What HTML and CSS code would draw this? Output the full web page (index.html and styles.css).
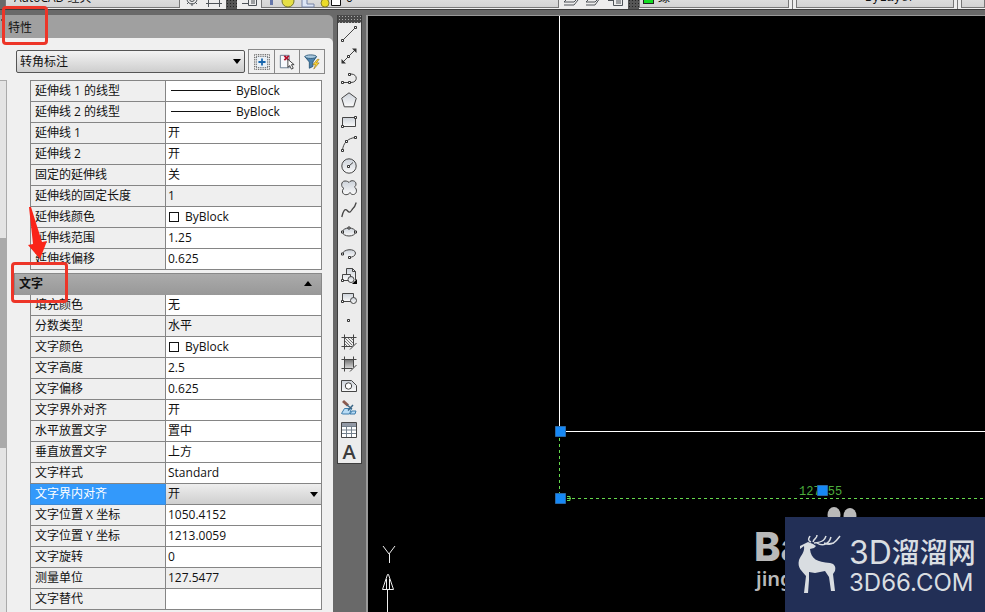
FILE: index.html
```html
<!DOCTYPE html>
<html lang="zh-CN">
<head>
<meta charset="utf-8">
<title>AutoCAD 特性</title>
<link rel="stylesheet" href="styles.css">
</head>
<body>
<svg class="defs" aria-hidden="true">
  <defs>
    <linearGradient id="shade" x1="0" y1="0" x2="0" y2="1"><stop offset="0" stop-color="#ccd2da"/><stop offset="1" stop-color="#fafafa"/></linearGradient>
    <linearGradient id="fade" x1="0" y1="0" x2="0" y2="1"><stop offset="0" stop-color="#777"/><stop offset="1" stop-color="#e0e0e0"/></linearGradient>
    <pattern id="hatch" width="3" height="3" patternUnits="userSpaceOnUse"><path d="M0 0L3 3" stroke="#555" stroke-width=".8"/></pattern>
  </defs>
</svg>
<header class="topbar">
  <label class="combo combo-workspace"><select aria-label="工作空间"><option>AutoCAD 经典</option></select></label>
  <div class="tray tray-gear">
    <button aria-label="工作空间设置"><svg viewBox="0 0 16 16"><circle cx="8" cy="8" r="2.5"/><path d="M8 1v3M8 12v3M1 8h3M12 8h3M3 3l2 2M11 11l2 2M13 3l-2 2M5 11l-2 2"/><circle cx="8" cy="8" r="5"/></svg></button>
    <button aria-label="我的工作空间"><svg viewBox="0 0 16 16"><path d="M2.500 3.500h11v9h-11zM0 12.500h16M2.500 10v6M13.500 10v6"/></svg></button>
  </div>
  <i class="grip"></i>
  <div class="tray"><button aria-label="图层特性"><svg viewBox="0 0 16 16"><path d="M1 12.500h6M7.500 7.500h8v7h-8zM10 10h4M10 12h4"/></svg></button></div>
  <label class="combo combo-layer"><select aria-label="图层"><option>0</option></select>
    <svg class="layer-icons" viewBox="0 0 86 12"><path d="M9 1h3v7h-3z" fill="#6677aa"/><circle cx="27" cy="4" r="6" fill="#e5df45" stroke="#77772b"/><path d="M41 2h5v5h7v3h-12z" fill="#dce5f5" stroke="#7783a5"/><circle cx="64" cy="6" r="4" fill="#ebdc27" stroke="#88812a"/><path d="M70.500 0v8.500h9V0" fill="#fff" stroke="#111"/></svg></label>
  <div class="tray tray-layers">
    <button aria-label="置为当前"><svg viewBox="0 0 16 16"><path d="M1 11l4-4h10l-4 4zM1 14h10l4-5"/></svg></button>
    <button aria-label="上一个图层"><svg viewBox="0 0 16 16"><path d="M1 11l4-4h9l-4 4zM1 14h9l5-7"/></svg></button>
    <button aria-label="图层状态"><svg viewBox="0 0 16 16"><path d="M1 9.500h5M6.500 7.500h9v7h-9zM9 10h5M9 12h5"/></svg></button>
  </div>
  <i class="grip"></i>
  <label class="combo combo-color"><i class="green"></i><select aria-label="颜色"><option>绿</option></select></label>
  <i class="divider"></i>
  <label class="combo combo-linetype"><select aria-label="线型"><option>ByLayer</option></select></label>
  <i class="divider"></i>
  <label class="combo combo-rest"><select aria-label="线宽"><option></option></select></label>
</header>

<main class="workspace">
  <section class="panel">
    <h1 class="panel-title">特性</h1>
    <div class="panel-body">
      <div class="scroll-strip"><i></i></div>
      <div class="picker">
        <label class="drop"><select aria-label="对象类型"><option>转角标注</option></select></label>
        <div class="picker-buttons">
          <button aria-label="切换 PICKADD"><svg viewBox="0 0 18 18"><path d="M2.500 2.500h13v13h-13z" fill="#e9f0f6" stroke="#222" stroke-dasharray="1 1"/><path d="M.5 .5h17v17H.5z" stroke="#444" stroke-dasharray="1 1"/><path d="M9 5v8M5 9h8" stroke="#1967ae" stroke-width="2"/></svg></button>
          <button aria-label="选择对象"><svg viewBox="0 0 18 18"><path d="M1.500 1.500h10v14h-10z" fill="#f6f9fc" stroke="#5d7288"/><path d="M6 2l5 5M11 2l-5 5" stroke="#b3122d" stroke-width="2"/><path d="M10 6v9l2-2 2 4 2-1-2-4h3z" fill="#fff" stroke="#333"/></svg></button>
          <button aria-label="快速选择"><svg viewBox="0 0 18 18"><path d="M1 3l5 6v7l4-2V9l4-6z" fill="#4c82ad" stroke="#285678"/><ellipse cx="7.500" cy="3" rx="6.500" ry="2" fill="#a9c9df" stroke="#285678"/><path d="M15 6l-5 6h3l-2 5 6-7h-3l3-4z" fill="#ffd732" stroke="#94771e" stroke-width=".7"/></svg></button>
        </div>
      </div>

      <table class="props">
        <tr><th>延伸线 1 的线型</th><td><i class="sample-line"></i>ByBlock</td></tr>
        <tr><th>延伸线 2 的线型</th><td><i class="sample-line"></i>ByBlock</td></tr>
        <tr><th>延伸线 1</th><td>开</td></tr>
        <tr><th>延伸线 2</th><td>开</td></tr>
        <tr><th>固定的延伸线</th><td>关</td></tr>
        <tr><th>延伸线的固定长度</th><td class="readonly">1</td></tr>
        <tr><th>延伸线颜色</th><td><i class="swatch"></i>ByBlock</td></tr>
        <tr><th>延伸线范围</th><td>1.25</td></tr>
        <tr><th>延伸线偏移</th><td>0.625</td></tr>
      </table>

      <button class="category">文字</button>
      <table class="props">
        <tr><th>填充颜色</th><td>无</td></tr>
        <tr><th>分数类型</th><td class="readonly">水平</td></tr>
        <tr><th>文字颜色</th><td><i class="swatch"></i>ByBlock</td></tr>
        <tr><th>文字高度</th><td>2.5</td></tr>
        <tr><th>文字偏移</th><td>0.625</td></tr>
        <tr><th>文字界外对齐</th><td>开</td></tr>
        <tr><th>水平放置文字</th><td>置中</td></tr>
        <tr><th>垂直放置文字</th><td>上方</td></tr>
        <tr><th>文字样式</th><td>Standard</td></tr>
        <tr class="selected"><th><label for="inside-align">文字界内对齐</label></th><td><div class="cell-drop"><select id="inside-align"><option>开</option><option>关</option></select></div></td></tr>
        <tr><th>文字位置 X 坐标</th><td>1050.4152</td></tr>
        <tr><th>文字位置 Y 坐标</th><td>1213.0059</td></tr>
        <tr><th>文字旋转</th><td>0</td></tr>
        <tr><th>测量单位</th><td class="readonly">127.5477</td></tr>
        <tr><th>文字替代</th><td></td></tr>
      </table>
    </div>
  </section>

  <nav class="draw-tools" aria-label="绘图">
    <i class="tools-grip"></i>
    <button aria-label="直线"><svg viewBox="0 0 16 16"><path d="M2 14L14 2"/><path class="node" d="M.5 13.500h2v2h-2zM13.500 .5h2v2h-2z"/></svg></button>
    <button aria-label="构造线"><svg viewBox="0 0 16 16"><path d="M2 14L14 2"/><path class="solid" d="M11 .5h4.500V5zM.5 11v4.500H5z"/><path class="node" d="M6.500 7.500h2v2h-2z"/></svg></button>
    <button aria-label="多段线"><svg viewBox="0 0 16 16"><path d="M2 12.500h8c7 0 7-8.500 0-8.500H8"/><path class="node" d="M.5 11.500h2v2h-2zM7.500 11.500h2v2h-2zM7.500 3.500h2v2h-2z"/></svg></button>
    <button aria-label="正多边形"><svg viewBox="0 0 16 16"><path class="fill" d="M8 .8l7.300 5.400-2.600 8.600H3.300L.7 6.200z"/></svg></button>
    <button aria-label="矩形"><svg viewBox="0 0 16 16"><path class="fill" d="M1.500 3.500h13v9h-13z"/><path class="node" d="M.5 11.500h2v2h-2zM13.500 2.500h2v2h-2z"/></svg></button>
    <button aria-label="圆弧"><svg viewBox="0 0 16 16"><path d="M1.500 14.500C2 7 7 2 14.500 1.500"/><path class="node" d="M.5 13.500h2v2h-2zM4.500 4.500h2v2h-2zM13.500 .5h2v2h-2z"/></svg></button>
    <button aria-label="圆"><svg viewBox="0 0 16 16"><circle class="fill" cx="8" cy="8" r="7.200"/><path d="M8 8l4-3.500"/><path class="node" d="M6.500 7.500h2v2h-2z"/></svg></button>
    <button aria-label="修订云线"><svg viewBox="0 0 16 16"><path class="fill" d="M8 2.500C10 -.5 15 .5 15 4c0 2-1 2.500-1.500 3 3 2 2.500 7-1 7.500-2 .2-3-1-3.500-2-1.500 3-7 3-7.500-.5C1.200 10 2 9 3 8.500-.5 7 0 1 4 1c2 0 3 .5 4 1.500z"/></svg></button>
    <button aria-label="样条曲线"><svg viewBox="0 0 16 16"><path d="M.8 15C2 9 4 6 6.200 8.500 9 12 10 9 11.500 7 14 5 14.500 3 15.200 .5" stroke-width="1.300"/></svg></button>
    <button aria-label="椭圆"><svg viewBox="0 0 16 16"><ellipse class="fill" cx="8" cy="8" rx="6.500" ry="4"/><path class="node" d="M.5 7h2v2h-2zM13.500 7h2v2h-2zM7 3h2v2H7z"/></svg></button>
    <button aria-label="椭圆弧"><svg viewBox="0 0 16 16"><path class="fill" d="M1.500 8C2 3 14 2 14.500 7c0 3-3 4-6 4.500"/><path class="node" d="M.5 7h2v2h-2zM7.500 10.500h2v2h-2z"/></svg></button>
    <button aria-label="插入块"><svg viewBox="0 0 16 16"><path class="fill" d="M5.500 6V.5h6l3 3V12M11.500 .5v3h3M1.500 6.500h8v6h-8z"/><circle class="fill" cx="10" cy="11.500" r="3"/><path class="node" d="M.5 11.500h2v2h-2z"/><path class="black" d="M16 11v5h-5z"/></svg></button>
    <button aria-label="创建块"><svg viewBox="0 0 16 16"><path class="fill" d="M1.500 3.500h11v8h-11z"/><circle class="fill" cx="12.500" cy="10.500" r="3"/><path class="node" d="M.5 10.500h2v2h-2z"/></svg></button>
    <button aria-label="点"><svg viewBox="0 0 16 16"><path class="node" d="M6.500 7.500h2v2h-2z"/></svg></button>
    <button aria-label="图案填充"><svg viewBox="0 0 16 16"><path fill="url(#hatch)" stroke="none" d="M3 3h10v7l-3 3H3z"/><path d="M3.500 .5v15M12.500 .5v11M.5 3.500h15M.5 12.500h11M9 15.500L15.500 9"/></svg></button>
    <button aria-label="渐变色"><svg viewBox="0 0 16 16"><path fill="url(#fade)" stroke="none" d="M4 4h9v6l-3 3H4z"/><path d="M3.500 .5v15M12.500 .5v11M.5 3.500h15M.5 12.500h11M9 15.500L15.500 9"/></svg></button>
    <button aria-label="面域"><svg viewBox="0 0 16 16"><path class="fill" d="M.5 2.500h10l5 5v6H.5z"/><circle cx="7.500" cy="8" r="3.200" fill="#fff"/></svg></button>
    <button aria-label="添加选定对象"><svg viewBox="0 0 16 16"><path d="M.5 13.500l3-5h7l-2 5.500H2zM9 14l2-3h4l-1 3z" fill="#b9dcf5" stroke="#3b7baa"/><path d="M2 1l5 4.500" stroke="#8b5a4e" stroke-width="3"/><path d="M6 5l5 4M12 5l-5 5.500" stroke="#3a6686" stroke-width="1.500"/></svg></button>
    <button aria-label="表格"><svg viewBox="0 0 16 16"><path d="M.5 .5h15v15H.5z" fill="#fff"/><path class="bar" d="M1 1h14v3H1z"/><path d="M1 4.500h14M1 8h14M1 11.500h14M5.500 4v11M10.500 4v11" stroke="#74818d"/></svg></button>
    <button class="text-tool" aria-label="多行文字">A</button>
  </nav>

  <section class="canvas" aria-label="绘图区">
    <svg class="drawing" width="2000" height="1200" viewBox="368 16 2000 1200">
      <path d="M559.500 16v415.500H2368" stroke="#fff"/>
      <path d="M559.500 438v56M572 498.500H2368" stroke="#65d84d" stroke-dasharray="3 3"/>
      <path d="M567 496.500h3v4h-3M567 498.500h4" stroke="#65d84d"/>
      <text x="799" y="495" class="dimension">127.55</text>
      <path d="M555.500 426.500h10v10h-10zM555.500 493.500h10v10h-10zM817.500 485.500h10v10h-10z" fill="#1688f5" stroke="#2868a7"/>
      <path d="M383 546l6 8 6-8M389.500 554v9M387.500 590v30M382.500 589.500h11l-5-15h-1zM386.500 579v10M389.500 579v10" stroke="#eee"/>
    </svg>
    <div class="watermark">
      <svg class="ears" viewBox="0 0 34 17"><ellipse cx="7" cy="8" rx="6.500" ry="8"/><ellipse cx="23" cy="9" rx="6.500" ry="8"/></svg>
      <div class="baidu"><strong>Ba</strong><span>jing</span></div>
      <div class="brand">
        <svg class="deer" viewBox="0 0 44 58"><path d="M3 11l8-4 5 2 3 2-2 2-4 1c1 10 7 13 20 14 5 1 6 4 5 8l-2 3 2 17h-4l-2-14-4-6-10 2-6-1v8l-1 13H7l2-17C5 36 0 33 2 25c2-5 6-8 5-14l-4 3z"/><path d="M14 7C10 5 12 3 13 1M16 7c1-4 4-3 4-7M17 8c10-1 11-4 12-7M20 8c6 4 12 1 14-6M27 8c9 4 13-3 16-7M31 9l6-1" fill="none" stroke="#d9dde1" stroke-width="1.500"/></svg>
        <div class="brand-text"><div class="brand-name"><span>3D</span>溜溜网</div><div class="brand-url">3D66.COM</div></div>
      </div>
    </div>
  </section>
</main>

<i class="mark mark-title"></i>
<i class="mark mark-category"></i>
<svg class="mark-arrow" viewBox="0 0 20 52"><path d="M1 0h2l11 35 5-1-7 18L0 38l5-1z"/></svg>
</body>
</html>
```
FILE: styles.css
```css
* { box-sizing: border-box; }
body {
  margin: 0; height: 100vh; overflow: hidden; display: flex; flex-direction: column;
  background: #696969; color: #111;
  font: 12px/20px "Open Sans", "Noto Sans CJK SC", sans-serif;
}
button, select { font: inherit; color: inherit; margin: 0; border-radius: 0; }
button { padding: 0; border: 0; background: none; }
select { appearance: none; outline: 0; }
i { font-style: normal; }
.defs { position: absolute; width: 0; height: 0; }

.topbar { flex: none; height: 10px; padding-left: 5px; display: flex; align-items: flex-end; overflow: hidden; border-bottom: 1px solid #3c3c3c; }
.combo { position: relative; flex: none; height: 24px; background: #efefef; padding-bottom: 1px; }
.combo select { display: block; width: 100%; height: 23px; border: 1px solid #777; background: linear-gradient(#eee, #d3d3d3); padding: 2px 8px 0; line-height: 20px; }
.combo-workspace { width: 175px; }
.combo-layer { width: 298px; }
.combo-layer select { padding-left: 84px; }
.layer-icons { position: absolute; left: 0; bottom: 0; width: 86px; height: 12px; fill: none; }
.combo-color { width: 150px; }
.combo-color select { padding-left: 18px; }
.green { position: absolute; left: 4px; bottom: 5px; width: 11px; height: 11px; background: #13dc22; border: 1px solid #222; }
.combo-linetype { width: 158px; }
.combo-linetype select { padding-left: 68px; font-family: "Liberation Mono", monospace; }
.combo-rest { flex: 1; }
.tray { flex: none; height: 24px; background: #ededed; display: flex; align-items: flex-end; gap: 8px; padding: 0 4px 2px; }
.tray svg { display: block; width: 16px; height: 16px; fill: none; stroke: #4e5358; }
.tray-gear { width: 46px; gap: 6px; }
.tray-layers { width: 69px; gap: 6px; }
.grip { flex: none; width: 11px; height: 10px; background: radial-gradient(circle, #222 1px, transparent 1px) 0 0 / 3px 3px, #555; }
.divider { flex: none; width: 7px; height: 24px; background: linear-gradient(90deg, #eee 3px, #777 3px, #777 4px, #eee 4px); }

.workspace { flex: 1; min-height: 0; display: flex; gap: 4px; padding-top: 5px; }
.panel { flex: none; width: 333px; background: #a0a0a0; overflow: hidden; border-top-right-radius: 5px; }
.panel-title { margin: 0; height: 23px; padding: 3px 8px 0; font-size: 12px; font-weight: 400; line-height: 20px; background: radial-gradient(circle, #555 1px, transparent 1px) 0 4px / 3px 3px no-repeat; }
.panel-body { position: relative; min-height: 100%; background: #f0f0f0; border-top-right-radius: 5px; padding: 11px 8px 0 14px; }
.scroll-strip { position: absolute; left: 0; top: 42px; bottom: 0; width: 7px; border: 1px solid #aaa; border-left: 0; background: #e4e4e4; }
.scroll-strip i { display: block; height: 210px; margin-top: 157px; background: #aaa; }
.picker { display: flex; align-items: center; gap: 3px; height: 25px; padding-left: 2px; margin-bottom: 6px; }
.drop { position: relative; flex: 1; }
.drop select { display: block; width: 100%; height: 23px; padding: 0 3px; border: 1px solid #555; border-radius: 2px; background: linear-gradient(#f3f3f3, #cecece); }
.drop::after, .cell-drop::after { content: ""; position: absolute; right: 4px; top: 9px; border: 4px solid transparent; border-top: 5px solid #000; border-bottom: 0; pointer-events: none; }
.picker-buttons { display: flex; height: 25px; border: 1px solid #888; }
.picker-buttons button { width: 25px; display: grid; place-items: center; }
.picker-buttons button + button { border-left: 1px solid #888; }
.picker-buttons svg { width: 16px; height: 16px; fill: none; }

.props { width: 292px; margin-left: 16px; border-collapse: collapse; table-layout: fixed; }
.props tr { height: 21px; }
.props th, .props td { height: 21px; padding: 0 4px; border: 1px solid #858585; line-height: 18px; text-align: left; font-weight: 400; white-space: nowrap; }
.props th { width: 135px; background: #efefef; }
.props td { background: #fff; padding: 0 2px; }
.props td.readonly { background: #efefef; }
.sample-line { display: inline-block; width: 60px; height: 1px; margin: 0 5px 0 3px; vertical-align: 4px; background: #111; }
.swatch { display: inline-block; width: 10px; height: 10px; margin: 0 6px 0 1px; vertical-align: -1px; border: 1px solid #111; background: #fff; }
.props .selected th { background: #3399fb; border-color: #3d8ad6; color: #fff; }
.props .selected td { padding: 0; }
.cell-drop { position: relative; }
.cell-drop::after { top: 8px; right: 3px; }
.cell-drop select { display: block; width: 100%; height: 20px; padding: 0 2px; border: 0; background: linear-gradient(#eee, #cfcfcf); }
.category { position: relative; display: block; width: 308px; height: 22px; margin-top: 3px; padding: 0 4px 1px; text-align: left; font-weight: 700; border: 1px solid #888; border-bottom: 0; background: linear-gradient(#ababab, #989898); }
.category::after { content: ""; position: absolute; right: 9px; top: 7px; border: 4px solid transparent; border-bottom: 5px solid #000; border-top: 0; }
.category + .props { margin-top: -1px; }

.draw-tools { flex: none; align-self: flex-start; width: 25px; background: #ececec; border: 1px solid #3e3e3e; border-top: 0; }
.tools-grip { display: block; height: 8px; background: radial-gradient(circle, #aaa 1px, transparent 1px) 0 0 / 3px 3px, #4a4a4a; }
.draw-tools button { display: grid; place-items: center; width: 22px; height: 22px; }
.draw-tools svg { width: 16px; height: 16px; fill: none; stroke: #454545; overflow: visible; }
.draw-tools .node { fill: #fff; stroke: #333; }
.draw-tools .solid { fill: #333; stroke: none; }
.draw-tools .black { fill: #000; stroke: none; }
.draw-tools .bar { fill: #9299a5; stroke: none; }
.draw-tools .fill { fill: url(#shade); }
.draw-tools .text-tool { font-size: 20px; line-height: 22px; font-weight: 600; color: #3c3c3c; }

.canvas { position: relative; flex: 1; min-width: 0; background: #000; border-left: 2px solid #999; border-top: 1px solid #999; overflow: hidden; }
.drawing { position: absolute; left: 0; top: 0; fill: none; }
.dimension { fill: #4cad3c; font: 12px "Liberation Mono", monospace; }
.watermark { position: absolute; right: 0; bottom: 0; display: flex; align-items: flex-end; }
.baidu { width: 31px; height: 85px; overflow: hidden; color: #b9b9b9; font-family: Inter, sans-serif; }
.baidu strong { display: block; font-size: 40px; line-height: 40px; font-weight: 800; }
.baidu span { display: block; padding-left: 2px; font: 600 20px/24px "Noto Sans", sans-serif; }
.ears { position: absolute; left: 73px; top: -10px; width: 34px; height: 17px; fill: #b9b9b9; }
.brand { position: relative; width: 200px; height: 95px; padding: 18px 10px 0 12px; display: flex; gap: 8px; background: #222f56; color: #d9dde1; }
.deer { flex: none; width: 44px; height: 58px; fill: #d9dde1; }
.brand-text { font-family: Inter, "Noto Sans CJK SC", sans-serif; white-space: nowrap; }
.brand-name { display: flex; font-size: 28px; line-height: 36px; font-weight: 500; }
.brand-name span { font-size: 32px; font-weight: 400; }
.brand-url { font-size: 24px; line-height: 24px; }

.mark { position: absolute; border: 3px solid #ed3528; border-radius: 4px; }
.mark-title { left: 2px; top: 6px; width: 46px; height: 39px; }
.mark-category { left: 11px; top: 262px; width: 57px; height: 41px; }
.mark-arrow { position: absolute; left: 28px; top: 207px; width: 20px; height: 52px; fill: #fa2418; }
```
